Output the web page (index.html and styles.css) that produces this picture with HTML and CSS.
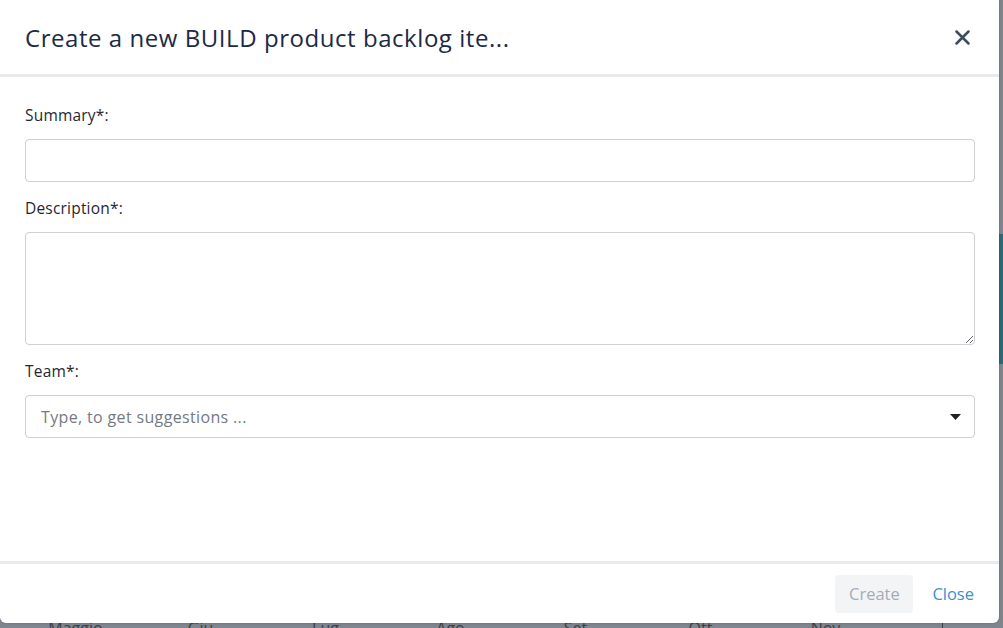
FILE: index.html
```html
<!DOCTYPE html>
<html lang="en">
<head>
  <meta charset="UTF-8" />
  <title>Create backlog item</title>
  <link rel="stylesheet" href="styles.css">
</head>
<body>
  <div class="page">
    <div class="page-side"><div class="teal"></div></div>
    <div class="months">
      <span>Maggio</span><span>Giu</span><span>Lug</span><span>Ago</span>
      <span>Set</span><span>Ott</span><span>Nov</span><span class="bar"></span>
    </div>
  </div>

  <div class="modal">
    <div class="modal-header">
      <h4 class="modal-title">Create a new BUILD product backlog ite...</h4>
      <button class="close-x" aria-label="Close">
        <svg width="15" height="15" viewBox="0 0 15 15"><path d="M1.5 1.5 L13.5 13.5 M13.5 1.5 L1.5 13.5" stroke="#3f4b5e" stroke-width="2.5" stroke-linecap="round"/></svg>
      </button>
    </div>

    <div class="modal-body">
      <label class="field-label">Summary*:</label>
      <input type="text" class="field">

      <label class="field-label">Description*:</label>
      <textarea class="field area"></textarea>

      <label class="field-label">Team*:</label>
      <div class="field select">
        <span class="placeholder">Type, to get suggestions ...</span>
        <svg width="11" height="6" viewBox="0 0 11 6"><path d="M0 0 H11 L5.5 6 Z" fill="#222"/></svg>
      </div>
    </div>

    <div class="modal-footer">
      <button class="btn btn-create">Create</button>
      <button class="btn btn-link">Close</button>
    </div>
  </div>
</body>
</html>
```

FILE: styles.css
```css
body {
  margin: 0;
  font-family: "Open Sans", "Noto Sans", Arial, sans-serif;
  overflow: hidden;
}
.page {
  height: 628px;
  background: #80868f;
  display: flex;
  flex-direction: column;
}
.page-side {
  flex: 1;
  display: flex;
  justify-content: flex-end;
  align-items: center;
}
.teal {
  width: 4px;
  height: 130px;
  background: #2f6878;
  margin-bottom: 20px;
}
.months {
  height: 10px;
  display: flex;
  padding-left: 13px;
  color: #3c4048;
  font-size: 16px;
  line-height: 20px;
  overflow: hidden;
}
.months span {
  width: 125px;
  text-align: center;
}
.months .bar {
  width: 1px;
  height: 10px;
  margin-left: 54px;
  background: #3c4048;
}

.modal {
  position: absolute;
  top: 0;
  left: 0;
  width: 999px;
  height: 623px;
  background: #fff;
  border-radius: 0 0 6px 6px;
  box-shadow: 0 0 3px rgba(0, 0, 0, 0.2);
  display: flex;
  flex-direction: column;
}
.modal-header {
  height: 77px;
  flex-shrink: 0;
  box-sizing: border-box;
  border-bottom: 3px solid #e9eaee;
  display: flex;
  align-items: center;
  justify-content: space-between;
  padding: 0 29px 0 25px;
}
.modal-title {
  margin: 0;
  font-size: 24px;
  font-weight: 400;
  color: #1d2a44;
  letter-spacing: 0.55px;
}
.close-x {
  border: none;
  background: none;
  padding: 0;
  display: flex;
  cursor: pointer;
}
.modal-body {
  flex: 1;
  padding: 27px 24px 0 25px;
  display: flex;
  flex-direction: column;
}
.field-label {
  font-size: 15.5px;
  color: #1f2733;
  line-height: 22px;
  margin-bottom: 13px;
  letter-spacing: 0.2px;
}
.field {
  box-sizing: border-box;
  flex-shrink: 0;
  width: 950px;
  height: 43px;
  border: 1px solid #cdd0d4;
  border-radius: 4px;
  margin: 0 0 15px;
  padding: 0 15px;
  font-family: inherit;
  font-size: 16px;
}
.area {
  height: 113px;
  resize: vertical;
}
.select {
  display: flex;
  align-items: center;
  justify-content: space-between;
  padding-right: 13px;
}
.placeholder {
  color: #747a82;
  font-size: 16px;
  letter-spacing: 0.35px;
}
.modal-footer {
  height: 62px;
  flex-shrink: 0;
  box-sizing: border-box;
  border-top: 3px solid #e9eaee;
  display: flex;
  justify-content: flex-end;
  align-items: center;
  gap: 19px;
  padding: 0 25px 0 0;
}
.btn {
  border: none;
  font-family: inherit;
  font-size: 16.5px;
  background: none;
  padding: 0 10px;
  height: 38px;
  border-radius: 4px;
}
.btn-create {
  background: #f3f4f6;
  color: #a5acb7;
  width: 78px;
}
.btn-link {
  color: #3a8fcd;
  padding: 0;
}
```
